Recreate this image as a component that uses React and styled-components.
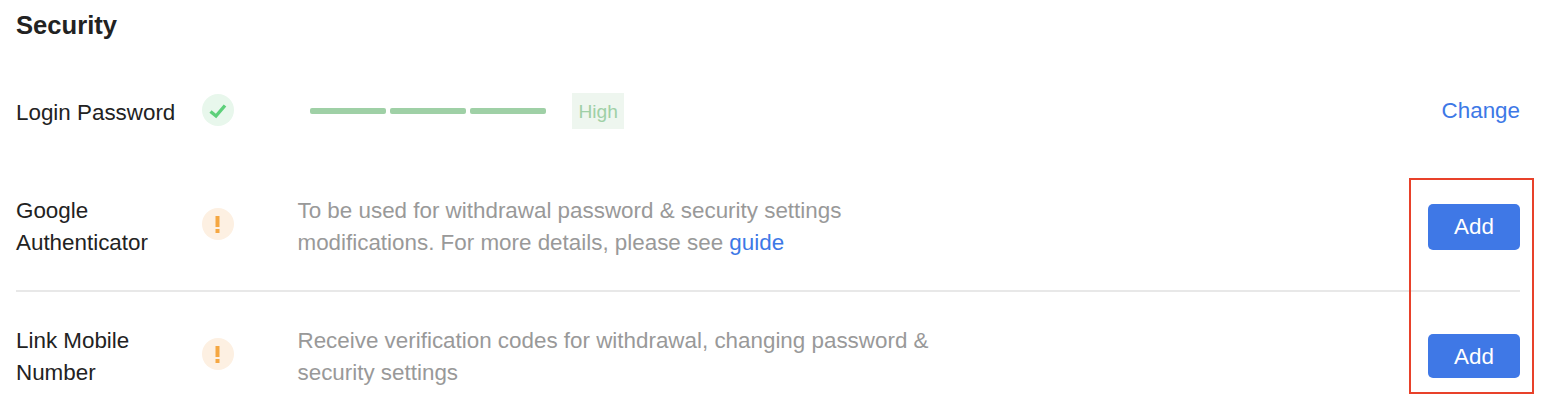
import React from "react";
import styled, { createGlobalStyle } from "styled-components";

const GlobalStyle = createGlobalStyle`
  body {
    margin: 0;
    background: #fff;
    font-family: "Liberation Sans", Arial, sans-serif;
  }
`;

const Page = styled.div`
  position: relative;
  height: 412px;
  padding: 0 32px 0 16px;
  overflow: hidden;
`;

const Title = styled.h2`
  margin: 0;
  height: 50px;
  font-size: 25.6px;
  line-height: 50px;
  font-weight: 700;
  color: #222;
`;

const Row = styled.div`
  display: grid;
  grid-template-columns: 186px 96px 1fr auto;
  align-items: center;
  padding: ${(p) => p.$pad};
  border-bottom: ${(p) => (p.$divider ? "2px solid #e8e8e8" : "none")};
`;

const Label = styled.div`
  width: 160px;
  margin-top: ${(p) => p.$top || 0}px;
  font-size: 22.4px;
  line-height: 32px;
  color: #222;
`;

const Badge = styled.span`
  display: flex;
  align-items: center;
  justify-content: center;
  width: 32px;
  height: 32px;
  margin-top: ${(p) => (p.$ok ? "-2px" : "-6px")};
  border-radius: 50%;
  background: ${(p) => (p.$ok ? "#e8f7ec" : "#fdf0e2")};
`;

const Strength = styled.div`
  display: flex;
  align-items: center;
  margin-left: 12px;
`;

const Bar = styled.span`
  width: 76px;
  height: 6px;
  margin-right: 4px;
  border-radius: 2px;
  background: #9fd0a6;
`;

const Level = styled.span`
  height: 36px;
  margin-left: 22px;
  padding: 0 6.5px;
  font-size: 19.2px;
  line-height: 38px;
  color: #9fd0a6;
  background: #eef6ef;
`;

const Desc = styled.div`
  max-width: 640px;
  margin-left: -0.5px;
  font-size: 22.4px;
  line-height: 32px;
  color: #999;
`;

const TextLink = styled.a`
  color: #3d78e6;
  text-decoration: none;
  font-size: 22.4px;
`;

const AddButton = styled.button`
  width: 92px;
  height: ${(p) => p.$h}px;
  margin-top: ${(p) => p.$top}px;
  border: 0;
  border-radius: 5px;
  padding: ${(p) => (p.$low ? "2px 0 0" : "0")};
  background: #3f78e6;
  color: #fff;
  font-family: inherit;
  font-size: 22.4px;
`;

const Highlight = styled.div`
  position: absolute;
  left: 1409px;
  top: 178px;
  width: 125px;
  height: 216px;
  box-sizing: border-box;
  border: 2px solid #e8412a;
`;

const Check = () => (
  <svg width="32" height="32" viewBox="0 0 32 32" fill="none">
    <path d="M8.5 17.5 L14 22 L23 11.5" stroke="#5dd07a" strokeWidth="3.4" />
  </svg>
);

const Warn = () => (
  <svg width="32" height="32" viewBox="0 0 32 32" fill="#f5a742">
    <rect x="13.5" y="8" width="4" height="11" />
    <rect x="13.5" y="21" width="4" height="4" />
  </svg>
);

export default function App() {
  return (
    <Page>
      <GlobalStyle />
      <Title>Security</Title>

      <Row $pad="43px 0 34px">
        <Label $top={4}>Login Password</Label>
        <Badge $ok>
          <Check />
        </Badge>
        <Strength>
          <Bar />
          <Bar />
          <Bar />
          <Level>High</Level>
        </Strength>
        <TextLink href="#">Change</TextLink>
      </Row>

      <Row $pad="32px 0 31px" $divider>
        <Label>Google Authenticator</Label>
        <Badge>
          <Warn />
        </Badge>
        <Desc>
          To be used for withdrawal password &amp; security settings modifications. For more
          details, please see <TextLink href="#">guide</TextLink>
        </Desc>
        <AddButton $h={46} $top={0}>Add</AddButton>
      </Row>

      <Row $pad="33px 0 32px">
        <Label>Link Mobile Number</Label>
        <Badge>
          <Warn />
        </Badge>
        <Desc>
          Receive verification codes for withdrawal, changing password &amp; security settings
        </Desc>
        <AddButton $h={44} $top={-2} $low>Add</AddButton>
      </Row>

      <Highlight />
    </Page>
  );
}
